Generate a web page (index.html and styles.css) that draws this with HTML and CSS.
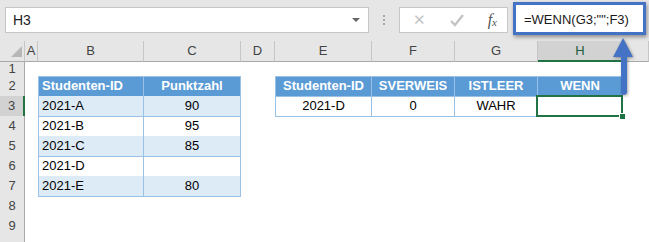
FILE: index.html
```html
<!DOCTYPE html>
<html lang="de">

<head>
    <meta charset="UTF-8">
    <title>WENN leer</title>
    <link rel="stylesheet" href="styles.css">
</head>

<body>
    <div class="toolbar">
        <div class="name-box">
            <span>H3</span>
            <span class="caret"></span>
        </div>
        <div class="grip"><i></i><i></i><i></i></div>
        <div class="fx-buttons">
            <span class="btn-x">&#x2715;</span>
            <svg class="btn-ok" width="16" height="14" viewBox="0 0 16 14"><path d="M2 8 L6 12 L14 2" fill="none" stroke="#c4c4c4" stroke-width="2.4"/></svg>
            <span class="btn-fx">f<sub>x</sub></span>
        </div>
        <div class="formula">=WENN(G3;"";F3)</div>
    </div>

    <div class="sheet">
        <div class="row heads">
            <div class="corner"><span></span></div>
            <div class="ch">A</div>
            <div class="ch">B</div>
            <div class="ch">C</div>
            <div class="ch">D</div>
            <div class="ch">E</div>
            <div class="ch">F</div>
            <div class="ch">G</div>
            <div class="ch active">H</div>
            <div class="ch"></div>
        </div>
        <div class="row short"><div class="rh">1</div></div>
        <div class="row">
            <div class="rh">2</div><div></div>
            <div class="th first left">Studenten-ID</div>
            <div class="th">Punktzahl</div>
            <div></div>
            <div class="th first">Studenten-ID</div>
            <div class="th">SVERWEIS</div>
            <div class="th">ISTLEER</div>
            <div class="th">WENN</div>
        </div>
        <div class="row">
            <div class="rh active">3</div><div></div>
            <div class="td band first left">2021-A</div>
            <div class="td band">90</div>
            <div></div>
            <div class="td first">2021-D</div>
            <div class="td">0</div>
            <div class="td">WAHR</div>
            <div class="td selected"></div>
        </div>
        <div class="row">
            <div class="rh">4</div><div></div>
            <div class="td first left">2021-B</div>
            <div class="td">95</div>
        </div>
        <div class="row">
            <div class="rh">5</div><div></div>
            <div class="td band first left">2021-C</div>
            <div class="td band">85</div>
        </div>
        <div class="row">
            <div class="rh">6</div><div></div>
            <div class="td first left">2021-D</div>
            <div class="td"></div>
        </div>
        <div class="row">
            <div class="rh">7</div><div></div>
            <div class="td band first left">2021-E</div>
            <div class="td band">80</div>
        </div>
        <div class="row"><div class="rh">8</div></div>
        <div class="row"><div class="rh">9</div></div>
        <div class="row stub"><div class="rh"></div></div>
    </div>

    <!-- annotation arrow from H3 up to the formula -->
    <svg class="arrow" width="30" height="66" viewBox="0 0 30 66">
        <path d="M14 2 L24 21 L18 21 L18 57 Q15 61 12 57 L12 21 L4 21 Z" fill="#4472c4"/>
    </svg>
</body>

</html>
```

FILE: styles.css
```css
:root {
    --toolbar-bg: #e6e6e6;
    --head-bg: #e6e6e6;
    --head-line: #c6c6c6;
    --head-text: #444;
    --excel-green: #217346;
    --table-blue: #5b9bd5;
    --table-band: #ddebf7;
    --table-line: #9bc2e6;
    --accent: #4472c4;
}

* {
    margin: 0;
    padding: 0;
    box-sizing: border-box;
}

body {
    position: relative;
    width: 649px;
    height: 242px;
    overflow: hidden;
    background: #fff;
    font-family: 'Liberation Sans', Arial, sans-serif;
    color: #000;
}

/* formula bar */
.toolbar {
    display: flex;
    align-items: flex-start;
    height: 41px;
    background: var(--toolbar-bg);
    padding-left: 5px;
}

.name-box {
    display: flex;
    align-items: center;
    justify-content: space-between;
    width: 364px;
    height: 26px;
    margin-top: 7px;
    padding: 0 8px 0 7px;
    background: #fff;
    border: 1px solid #c6c6c6;
    font-size: 14px;
    color: #222;
}

.caret {
    width: 0;
    height: 0;
    border-left: 4px solid transparent;
    border-right: 4px solid transparent;
    border-top: 4px solid #666;
}

.grip {
    display: flex;
    flex-direction: column;
    gap: 2px;
    width: 30px;
    align-items: center;
    margin-top: 15px;
}

.grip i {
    width: 2px;
    height: 2px;
    background: #a6a6a6;
}

.fx-buttons {
    display: flex;
    align-items: center;
    justify-content: space-between;
    width: 109px;
    height: 26px;
    margin-top: 7px;
    padding: 0 10px 0 13px;
    background: #fff;
    border: 1px solid #c6c6c6;
}

.btn-x {
    font-size: 15px;
    color: #c4c4c4;
}

.btn-fx {
    font-family: 'Liberation Serif', serif;
    font-style: italic;
    font-size: 16px;
    color: #555;
}

.btn-fx sub {
    font-size: 11px;
    vertical-align: -1px;
}

.formula {
    width: 133px;
    height: 33px;
    margin-top: 2px;
    margin-left: 5px;
    padding: 7px 0 0 8px;
    background: #fff;
    border: 3px solid var(--accent);
    box-shadow: 1px 2px 4px rgba(0, 0, 0, 0.4);
    font-size: 13px;
    color: #1a1a1a;
    position: relative;
    z-index: 1;
}

/* grid */
.row {
    display: grid;
    grid-template-columns: 25px 13px 106px 97px 34px 97px 83px 83px 85px 26px;
    height: 20px;
}

.row.short {
    height: 15px;
}

.row.stub {
    height: 6px;
}

.heads .ch,
.corner {
    background: var(--head-bg);
    border-right: 1px solid var(--head-line);
    border-bottom: 1px solid #a9a9a9;
    font-size: 13px;
    color: var(--head-text);
    text-align: center;
    line-height: 19px;
}

.corner {
    position: relative;
}

.corner span {
    position: absolute;
    right: 2px;
    bottom: 4px;
    width: 0;
    height: 0;
    border-left: 11px solid transparent;
    border-bottom: 11px solid #b7b7b7;
}

.ch.active {
    background: #d2d2d2;
    border-bottom: 2px solid var(--excel-green);
    color: #1f5c3b;
}

.rh {
    background: var(--head-bg);
    border-right: 1px solid #a9a9a9;
    border-bottom: 1px solid var(--head-line);
    font-size: 13px;
    color: var(--head-text);
    text-align: center;
    line-height: 20px;
}

.short .rh {
    line-height: 15px;
}

.stub .rh {
    border-bottom: none;
}

.rh.active {
    background: #d2d2d2;
    border-right: 2px solid var(--excel-green);
}

/* tables */
.th,
.td {
    font-size: 13px;
    line-height: 19px;
    text-align: center;
    border-right: 1px solid var(--table-line);
    border-bottom: 1px solid var(--table-line);
    white-space: nowrap;
}

.th {
    background: var(--table-blue);
    color: #fff;
    font-weight: bold;
    border-top: 1px solid var(--table-line);
    line-height: 18px;
}

.first {
    border-left: 1px solid var(--table-line);
}

.left {
    text-align: left;
    padding-left: 3px;
}

.band {
    background: var(--table-band);
}

.selected {
    position: relative;
}

.selected::after {
    content: '';
    position: absolute;
    top: -1px;
    left: -2px;
    right: -1px;
    bottom: -1px;
    border: 2px solid var(--excel-green);
}

.selected::before {
    content: '';
    position: absolute;
    right: -4px;
    bottom: -4px;
    width: 5px;
    height: 5px;
    background: var(--excel-green);
    border: 1px solid #fff;
    z-index: 1;
}

.arrow {
    position: absolute;
    left: 609px;
    top: 36px;
    filter: drop-shadow(1px 1px 1.5px rgba(0, 0, 0, 0.35));
}
```
